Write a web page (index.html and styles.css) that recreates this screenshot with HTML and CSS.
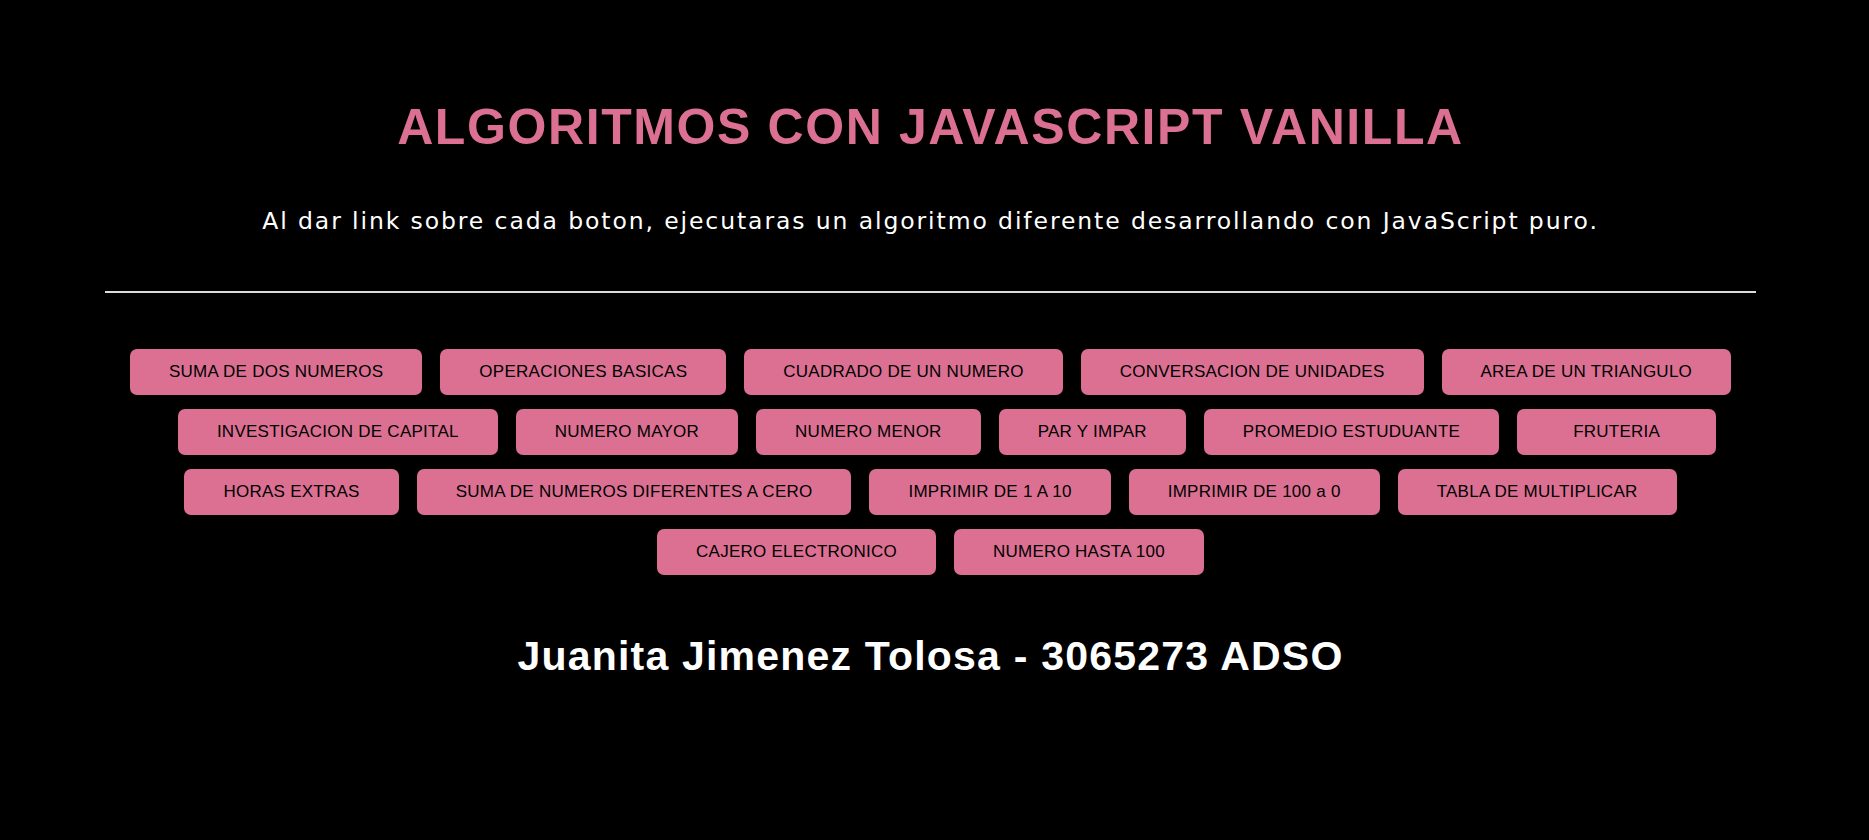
FILE: index.html
```html
<!DOCTYPE html>
<html lang="es">
<head>
<meta charset="UTF-8">
<title>Algoritmos con JavaScript Vanilla</title>
<link rel="stylesheet" href="styles.css">
</head>
<body>
<main class="page">
  <h1 class="title">ALGORITMOS CON JAVASCRIPT VANILLA</h1>
  <p class="intro">Al dar link sobre cada boton, ejecutaras un algoritmo diferente desarrollando con JavaScript puro.</p>
  <hr class="divider">
  <section class="buttons">
    <div class="row">
      <button class="btn">SUMA DE DOS NUMEROS</button>
      <button class="btn">OPERACIONES BASICAS</button>
      <button class="btn">CUADRADO DE UN NUMERO</button>
      <button class="btn">CONVERSACION DE UNIDADES</button>
      <button class="btn">AREA DE UN TRIANGULO</button>
    </div>
    <div class="row row-shift">
      <button class="btn">INVESTIGACION DE CAPITAL</button>
      <button class="btn">NUMERO MAYOR</button>
      <button class="btn">NUMERO MENOR</button>
      <button class="btn">PAR Y IMPAR</button>
      <button class="btn">PROMEDIO ESTUDUANTE</button>
      <button class="btn btn-wide">FRUTERIA</button>
    </div>
    <div class="row">
      <button class="btn">HORAS EXTRAS</button>
      <button class="btn">SUMA DE NUMEROS DIFERENTES A CERO</button>
      <button class="btn">IMPRIMIR DE 1 A 10</button>
      <button class="btn">IMPRIMIR DE 100 a 0</button>
      <button class="btn">TABLA DE MULTIPLICAR</button>
    </div>
    <div class="row">
      <button class="btn">CAJERO ELECTRONICO</button>
      <button class="btn">NUMERO HASTA 100</button>
    </div>
  </section>
  <h2 class="author">Juanita Jimenez Tolosa - 3065273 ADSO</h2>
</main>
</body>
</html>
```
FILE: styles.css
```css
html, body {
  margin: 0;
  padding: 0;
  background: #000;
}

body {
  font-family: "Liberation Sans", Arial, sans-serif;
  color: #fff;
}

.page {
  margin-right: 8px;
  padding-top: 97px;
  padding-bottom: 40px;
  text-align: center;
}

.title {
  margin: 0;
  font-family: "Liberation Sans", Arial, sans-serif;
  font-weight: 700;
  font-size: 50px;
  line-height: 60px;
  letter-spacing: 1.6px;
  color: #db7093;
}

.intro {
  margin: 51px 0 0;
  font-family: "DejaVu Sans", sans-serif;
  font-size: 23.5px;
  line-height: 26px;
  letter-spacing: 1.9px;
  color: #fff;
}

.divider {
  margin: 57px 105px 0;
  height: 2px;
  border: none;
  background: #dcdcdc;
}

.buttons {
  margin-top: 56px;
  display: flex;
  flex-direction: column;
  gap: 14px;
}

.row {
  display: flex;
  justify-content: center;
  gap: 18px;
}

.row-shift {
  padding-left: 33px;
}

.btn {
  height: 46px;
  padding: 0 39px;
  border: none;
  border-radius: 7px;
  background: #db7093;
  color: #000;
  font-family: "Liberation Sans", Arial, sans-serif;
  font-size: 17px;
  letter-spacing: 0.25px;
  cursor: pointer;
}

.btn-wide {
  padding: 0 56px;
}

.author {
  margin: 57px 0 0;
  font-family: "Liberation Sans", Arial, sans-serif;
  font-weight: 700;
  font-size: 41px;
  line-height: 48px;
  letter-spacing: 1.2px;
  color: #fff;
}
```
